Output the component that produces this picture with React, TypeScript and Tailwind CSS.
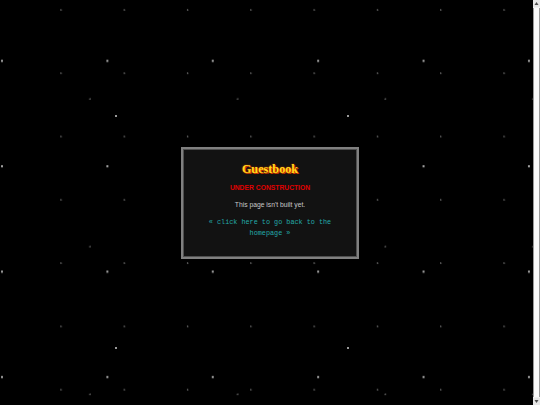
import React from "react";

function ScrollArrow({ up }: { up: boolean }) {
  return (
    <div className="h-[7px] w-[7px] bg-[#e6e6e6] flex items-center justify-center">
      <svg width="5" height="5" viewBox="0 0 5 5">
        {up ? (
          <polygon points="2.5,1 4.5,4 0.5,4" fill="#505050" />
        ) : (
          <polygon points="0.5,1 4.5,1 2.5,4" fill="#505050" />
        )}
      </svg>
    </div>
  );
}

export default function App() {
  return (
    <div className="flex h-[405px] w-[540px] overflow-hidden bg-black">
      <div className="flex-1 flex items-center justify-center pl-[7px] bg-black [background-image:radial-gradient(circle_at_61px_10px,#5a5a5a_0.6px,transparent_1.1px),radial-gradient(circle_at_2px_61px,#a0a0a0_0.9px,transparent_1.4px),radial-gradient(circle_at_90px_99px,#555_0.6px,transparent_1.1px),radial-gradient(circle_at_116px_116px,#999_0.9px,transparent_1.4px)] [background-size:63.3px_63.3px,105.4px_105.4px,147.7px_147.7px,232px_232px]">
        <div className="w-[178px] h-[112px] border-[2px] border-[#808080] bg-[#505050] p-[1px]">
          <div className="h-full w-full bg-[#121212] flex flex-col items-center px-[16px] pt-[12px] text-center">
            <div className="font-['Liberation_Serif',serif] font-bold text-[12.2px] leading-[14px] text-[#ffdc1a] [text-shadow:1px_1px_0_#d83a00,0_0_1.5px_#ff4000]">
              Guestbook
            </div>
            <div className="mt-[8px] font-['Liberation_Sans',Arial,sans-serif] font-bold text-[6.75px] leading-[8px] text-[#e00000]">
              UNDER CONSTRUCTION
            </div>
            <div className="mt-[9px] font-['Liberation_Sans',Arial,sans-serif] text-[6.75px] leading-[8px] text-[#c8c8c8]">
              This page isn't built yet.
            </div>
            <div className="mt-[8px] font-['Liberation_Mono','Courier_New',monospace] text-[6.8px] leading-[11px] text-[#23a9a9]">
              « click here to go back to the homepage »
            </div>
          </div>
        </div>
      </div>
      <div className="w-[7px] h-full flex flex-col bg-[#f0f0f0]">
        <ScrollArrow up />
        <div className="flex-1 py-[1px]">
          <div className="h-full w-full bg-[#fbfbfb] border-x border-[#9a9a9a]" />
        </div>
        <ScrollArrow up={false} />
      </div>
    </div>
  );
}
